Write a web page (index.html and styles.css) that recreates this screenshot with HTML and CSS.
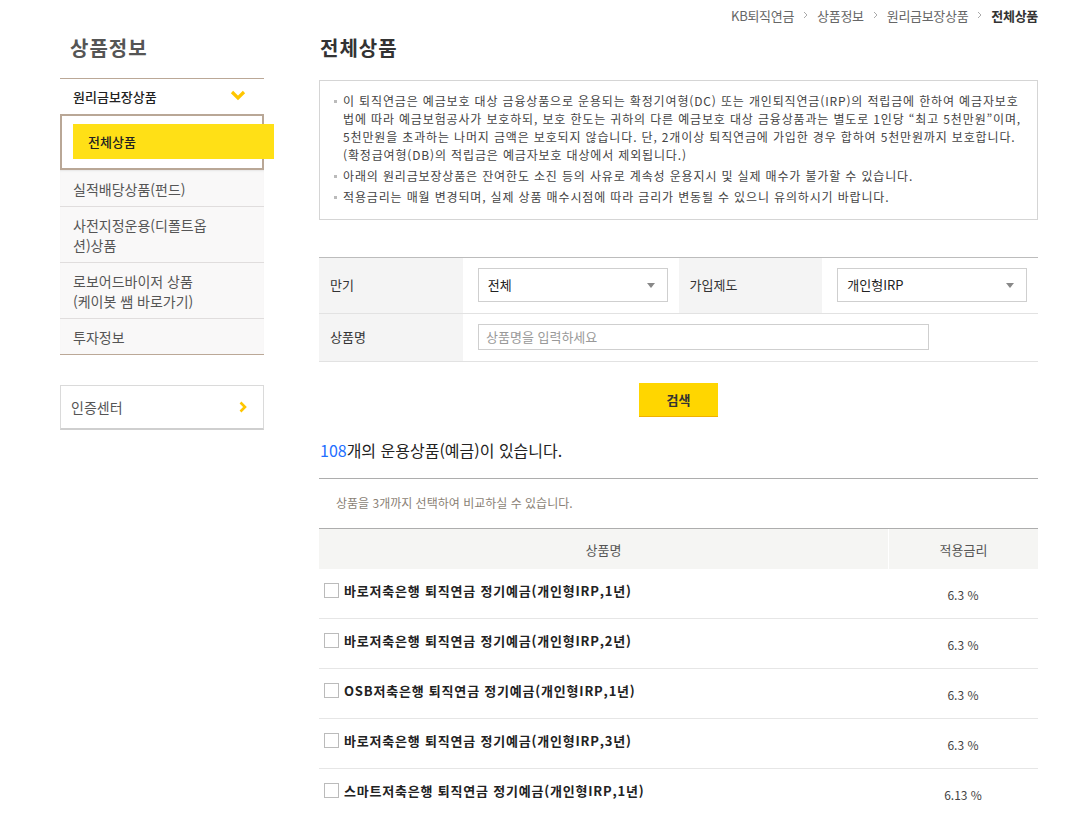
FILE: index.html
```html
<!DOCTYPE html>
<html lang="ko">
<head>
<meta charset="utf-8">
<title>전체상품</title>
<link rel="stylesheet" href="styles.css">
</head>
<body>
<div class="page">
  <div class="breadcrumb">
    <span>KB퇴직연금</span>
    <svg class="crumb-sep" width="5" height="8" viewBox="0 0 5 8"><path d="M1 1l3 3-3 3" fill="none" stroke="#aaa" stroke-width="1"/></svg>
    <span>상품정보</span>
    <svg class="crumb-sep" width="5" height="8" viewBox="0 0 5 8"><path d="M1 1l3 3-3 3" fill="none" stroke="#aaa" stroke-width="1"/></svg>
    <span>원리금보장상품</span>
    <svg class="crumb-sep" width="5" height="8" viewBox="0 0 5 8"><path d="M1 1l3 3-3 3" fill="none" stroke="#aaa" stroke-width="1"/></svg>
    <strong class="crumb-current">전체상품</strong>
  </div>

  <div class="layout">
    <aside class="sidebar">
      <h2 class="side-title">상품정보</h2>
      <div class="menu-head">
        <span>원리금보장상품</span>
        <svg class="menu-chevron" width="16" height="11" viewBox="0 0 16 11"><path d="M2 2l6 6 6-6" fill="none" stroke="#ffc600" stroke-width="3.2"/></svg>
      </div>
      <div class="sub-box">
        <div class="sub-active">전체상품</div>
      </div>
      <ul class="menu-list">
        <li>실적배당상품(펀드)</li>
        <li>사전지정운용(디폴트옵<br>션)상품</li>
        <li>로보어드바이저 상품<br>(케이봇 쌤 바로가기)</li>
        <li>투자정보</li>
      </ul>
      <div class="cert-box">
        <span>인증센터</span>
        <svg width="8" height="12" viewBox="0 0 8 12"><path d="M1.5 1.5l4.5 4.5-4.5 4.5" fill="none" stroke="#ffc600" stroke-width="2.6"/></svg>
      </div>
    </aside>

    <main class="main">
      <h1 class="main-title">전체상품</h1>
      <div class="notice">
        <ul>
          <li>이 퇴직연금은 예금보호 대상 금융상품으로 운용되는 확정기여형(DC) 또는 개인퇴직연금(IRP)의 적립금에 한하여 예금자보호<br>법에 따라 예금보험공사가 보호하되, 보호 한도는 귀하의 다른 예금보호 대상 금융상품과는 별도로 1인당 “최고 5천만원”이며,<br>5천만원을 초과하는 나머지 금액은 보호되지 않습니다. 단, 2개이상 퇴직연금에 가입한 경우 합하여 5천만원까지 보호합니다.<br>(확정급여형(DB)의 적립금은 예금자보호 대상에서 제외됩니다.)</li>
          <li>아래의 원리금보장상품은 잔여한도 소진 등의 사유로 계속성 운용지시 및 실제 매수가 불가할 수 있습니다.</li>
          <li>적용금리는 매월 변경되며, 실제 상품 매수시점에 따라 금리가 변동될 수 있으니 유의하시기 바랍니다.</li>
        </ul>
      </div>

      <div class="filter">
        <div class="filter-row">
          <div class="f-label">만기</div>
          <div class="f-value">
            <div class="select"><span>전체</span><span class="caret"></span></div>
          </div>
          <div class="f-label">가입제도</div>
          <div class="f-value">
            <div class="select"><span>개인형IRP</span><span class="caret"></span></div>
          </div>
        </div>
        <div class="filter-row row-name">
          <div class="f-label">상품명</div>
          <div class="f-value wide">
            <div class="text-input">상품명을 입력하세요</div>
          </div>
        </div>
      </div>

      <div class="btn-wrap"><button class="btn-search">검색</button></div>

      <p class="count"><span class="num">108</span>개의 운용상품(예금)이 있습니다.</p>
      <p class="guide">상품을 3개까지 선택하여 비교하실 수 있습니다.</p>

      <div class="table">
        <div class="t-head">
          <div class="c-name">상품명</div>
          <div class="c-rate">적용금리</div>
        </div>
        <div class="t-row">
          <div class="c-name"><span class="chk"></span>바로저축은행 퇴직연금 정기예금(개인형IRP,1년)</div>
          <div class="c-rate">6.3 %</div>
        </div>
        <div class="t-row">
          <div class="c-name"><span class="chk"></span>바로저축은행 퇴직연금 정기예금(개인형IRP,2년)</div>
          <div class="c-rate">6.3 %</div>
        </div>
        <div class="t-row">
          <div class="c-name"><span class="chk"></span>OSB저축은행 퇴직연금 정기예금(개인형IRP,1년)</div>
          <div class="c-rate">6.3 %</div>
        </div>
        <div class="t-row">
          <div class="c-name"><span class="chk"></span>바로저축은행 퇴직연금 정기예금(개인형IRP,3년)</div>
          <div class="c-rate">6.3 %</div>
        </div>
        <div class="t-row">
          <div class="c-name"><span class="chk"></span>스마트저축은행 퇴직연금 정기예금(개인형IRP,1년)</div>
          <div class="c-rate">6.13 %</div>
        </div>
      </div>
    </main>
  </div>
</div>
</body>
</html>
```

FILE: styles.css
```css
* { box-sizing: border-box; }
html, body { margin: 0; padding: 0; background: #fff; }
body {
  font-family: "Noto Sans CJK KR", "Noto Sans", sans-serif;
  color: #333;
  font-size: 13px;
}
ul { margin: 0; padding: 0; list-style: none; }
p, h1, h2 { margin: 0; }

.page { width: 1038px; padding-left: 60px; }

.breadcrumb {
  height: 30px;
  display: flex;
  justify-content: flex-end;
  align-items: center;
  gap: 9px;
  font-size: 13px;
  color: #666;
  letter-spacing: -0.3px;
}
.crumb-current { color: #333; font-weight: 700; }

.layout { display: flex; gap: 55px; align-items: flex-start; }

.sidebar { width: 204px; flex: none; }
.side-title {
  height: 48px;
  padding: 4px 0 0 10px;
  line-height: 28px;
  font-size: 20px;
  font-weight: 700;
  letter-spacing: 1px;
  color: #555;
}
.menu-head {
  border-top: 1px solid #bba897;
  height: 36px;
  display: flex;
  align-items: center;
  justify-content: space-between;
  padding: 0 18px 0 13px;
  font-size: 13px;
  font-weight: 500;
  color: #222;
}
.menu-chevron { margin-top: -2px; }
.sub-box {
  border: 2px solid #b9a796;
  height: 56px;
  padding: 8px 0 0 11px;
}
.sub-active {
  width: 201px;
  height: 35px;
  background: #ffe016;
  padding-left: 15px;
  line-height: 35px;
  font-size: 13px;
  font-weight: 500;
  color: #222;
}
.menu-list {
  background: #f9f8f8;
  padding-top: 1px;
  border-bottom: 1px solid #bba897;
  box-shadow: inset 0 2px 2px -1px #e6e6e6;
}
.menu-list li {
  padding: 8px 13px 7px;
  line-height: 20px;
  font-size: 14px;
  color: #555;
  border-bottom: 1px solid #e0dddd;
}
.menu-list li:last-child { border-bottom: none; }

.cert-box {
  margin-top: 30px;
  height: 45px;
  border: 1px solid #dadada;
  border-bottom: 2px solid #cfcfcf;
  display: flex;
  align-items: center;
  justify-content: space-between;
  padding: 0 16px 0 10px;
  font-size: 14px;
  color: #555;
}

.main { width: 719px; flex: none; }
.main-title {
  height: 50px;
  padding: 4px 0 0 1px;
  line-height: 28px;
  font-size: 20px;
  font-weight: 700;
  letter-spacing: 1px;
  color: #333;
}
.notice {
  border: 1px solid #d5d5d5;
  height: 140px;
  padding: 11px 10px 0 14px;
}
.notice li {
  position: relative;
  padding-left: 9px;
  font-size: 12px;
  line-height: 18px;
  color: #444;
  letter-spacing: 0.85px;
  white-space: nowrap;
  margin-bottom: 3px;
}
.notice li::before {
  content: "";
  position: absolute;
  left: 0;
  top: 8px;
  width: 3px;
  height: 3px;
  background: #bbb;
}

.filter {
  margin-top: 37px;
  border-top: 1px solid #bcbcbc;
}
.filter-row {
  display: flex;
  height: 56px;
  border-bottom: 1px solid #e2e2e2;
}
.filter-row.row-name { height: 48px; }
.f-label {
  width: 144px;
  background: #f4f4f4;
  padding: 0 0 2px 11px;
  display: flex;
  align-items: center;
  font-size: 13px;
  color: #333;
}
.f-value {
  width: 216px;
  padding: 10px 0 0 15px;
}
.f-value.wide { width: 575px; }
.row-name .f-value { padding-top: 10px; }
.select {
  width: 190px;
  height: 34px;
  border: 1px solid #cfcfcf;
  display: flex;
  align-items: center;
  justify-content: space-between;
  padding: 0 12px 2px 9px;
  font-size: 13px;
  color: #222;
}
.caret {
  width: 0;
  height: 0;
  border-left: 4px solid transparent;
  border-right: 4px solid transparent;
  border-top: 5px solid #888;
  margin-top: 2px;
}
.text-input {
  width: 451px;
  height: 26px;
  border: 1px solid #cfcfcf;
  padding-left: 7px;
  line-height: 23px;
  font-size: 13px;
  color: #999;
}

.btn-wrap { display: flex; justify-content: center; margin-top: 21px; }
.btn-search {
  width: 79px;
  height: 34px;
  border: none;
  border-bottom: 1px solid #f0b000;
  background: #ffd600;
  font-family: inherit;
  font-size: 13px;
  font-weight: 700;
  color: #333;
  padding: 0;
}

.count {
  margin-top: 21px;
  padding-left: 1px;
  line-height: 24px;
  font-size: 16px;
  color: #222;
}
.count .num { color: #1f6fff; }
.guide {
  margin-top: 16px;
  border-top: 1px solid #adadad;
  padding: 15px 0 0 17px;
  height: 50px;
  line-height: 18px;
  font-size: 12px;
  color: #8a7f75;
}

.table { border-top: 1px solid #adadad; }
.t-head {
  display: flex;
  height: 40px;
  background: #f5f5f3;
  font-size: 13px;
  color: #555;
}
.t-head .c-name, .t-head .c-rate {
  display: flex;
  align-items: center;
  justify-content: center;
}
.t-head .c-rate { border-left: 1px solid #fff; }
.c-name { width: 569px; }
.c-rate { width: 150px; }
.t-row {
  display: flex;
  height: 50px;
  border-bottom: 1px solid #e6e6e6;
}
.t-row .c-name {
  display: flex;
  align-items: center;
  align-self: flex-start;
  padding: 13px 0 0 5px;
  line-height: 17px;
  font-size: 13px;
  font-weight: 700;
  color: #222;
  letter-spacing: 0.8px;
}
.chk {
  width: 15px;
  height: 15px;
  border: 1px solid #bbb;
  margin-right: 5px;
  flex: none;
  background: #fff;
}
.t-row .c-rate {
  display: flex;
  align-items: center;
  justify-content: center;
  padding-top: 1px;
  font-size: 12px;
  color: #444;
}
```
